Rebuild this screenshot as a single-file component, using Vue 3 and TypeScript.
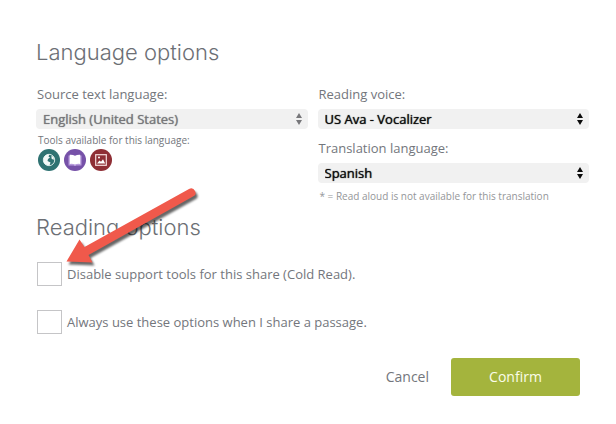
<script setup lang="ts">
import { ref } from 'vue'

const source = ref('English (United States)')
const voice = ref('US Ava - Vocalizer')
const translation = ref('Spanish')
const coldRead = ref(false)
const remember = ref(false)
</script>

<template>
  <form class="share" @submit.prevent>
    <section>
      <h2>Language options</h2>
      <div class="columns">
        <div class="column">
          <label for="source">Source text language:</label>
          <div class="picker disabled">
            <select id="source" v-model="source" disabled>
              <option>English (United States)</option>
            </select>
            <svg class="arrows" viewBox="0 0 6 12" aria-hidden="true"><path d="M3 0 6 5H0zM0 7h6L3 12z" /></svg>
          </div>
          <p class="tools-title">Tools available for this language:</p>
          <div class="tools">
            <svg viewBox="0 0 22 22" role="img" aria-label="Translate">
              <circle cx="11" cy="11" r="11" fill="#2f7272" />
              <circle cx="11" cy="11" r="5.700" fill="none" stroke="#d5e6e4" stroke-width="1" />
              <path d="M5.500 9.500Q7 5.300 11.500 5.300L10.500 7.500 12 8.500 10 10 9.500 12 12.500 13.500 11.500 16.500Q6.500 16.500 5.500 12.500zM13.500 6.500l2.500 2-.5 2.500-2-1.500z" fill="#f2f8f7" />
            </svg>
            <svg viewBox="0 0 22 22" role="img" aria-label="Dictionary">
              <circle cx="11" cy="11" r="11" fill="#7651a8" />
              <path d="M4.500 6.500h13v10h-5.200q-1.300 1-2.600 0H4.500z" fill="#b79bdc" />
              <path d="M5.800 5.800Q8.800 5.500 11 7q2.200-1.500 5.200-1.200v9.100q-3-.5-5.200.7-2.200-1.200-5.200-.7z" fill="#fff" />
            </svg>
            <svg viewBox="0 0 22 22" role="img" aria-label="Picture dictionary">
              <circle cx="11" cy="11" r="11" fill="#8f2e35" />
              <rect x="5.700" y="5.700" width="10.600" height="10.600" fill="none" stroke="#f5dddd" stroke-width="1.200" />
              <path d="m7 14.500 2.500-3 1.500 1.300 2-2.600 2.200 4.300z" fill="#fff" />
              <circle cx="9" cy="8.500" r="1" fill="#fff" />
            </svg>
          </div>
        </div>
        <div class="column">
          <label for="voice">Reading voice:</label>
          <div class="picker">
            <select id="voice" v-model="voice">
              <option>US Ava - Vocalizer</option>
            </select>
            <svg class="arrows" viewBox="0 0 6 12" aria-hidden="true"><path d="M3 0 6 5H0zM0 7h6L3 12z" /></svg>
          </div>
          <label for="translation" class="second">Translation language:</label>
          <div class="picker">
            <select id="translation" v-model="translation">
              <option>Spanish</option>
            </select>
            <svg class="arrows" viewBox="0 0 6 12" aria-hidden="true"><path d="M3 0 6 5H0zM0 7h6L3 12z" /></svg>
          </div>
          <p class="note">* = Read aloud is not available for this translation</p>
        </div>
      </div>
    </section>
    <section class="reading">
      <h2>Reading options</h2>
      <div class="checks">
        <label class="check"><input v-model="coldRead" type="checkbox" />Disable support tools for this share (Cold Read).</label>
        <label class="check"><input v-model="remember" type="checkbox" />Always use these options when I share a passage.</label>
      </div>
      <svg class="pointer" viewBox="0 0 144 90" aria-hidden="true">
        <path d="M8.500 71.500 21.500 49.500 26.500 57 131-1 Q135-3 137 1 T135 6.500 L30.500 65 34.500 72.500z" fill="#f0594b" />
      </svg>
    </section>
    <div class="actions">
      <button type="button" class="cancel">Cancel</button>
      <button type="submit" class="confirm">Confirm</button>
    </div>
  </form>
</template>

<style>
body {
  margin: 0;
  background: #fff;
}
</style>

<style scoped>
.share {
  padding: 36px 27px 28px 36px;
  color: #73767c;
  font: 13px/20px "Open Sans", "Noto Sans", sans-serif;
}
h2 {
  margin: 0;
  font: 300 22px/32px Inter, "Noto Sans", sans-serif;
  color: #6c6f75;
}
.columns {
  display: grid;
  grid-template-columns: 1fr 1fr;
  gap: 10px;
  margin-top: 16px;
}
.column > label {
  display: block;
  padding: 0 1px 5px;
}
.column > .second {
  padding-top: 9px;
}
.picker {
  display: grid;
  align-items: center;
  color: #0c0c0c;
}
.picker > * {
  grid-area: 1 / 1;
}
.picker.disabled {
  color: #77777a;
}
select {
  appearance: none;
  width: 100%;
  height: 20px;
  margin: 0;
  padding: 0 20px 0 7px;
  border: 0;
  border-radius: 4px;
  background: #f1f1f1;
  color: inherit;
  font: 500 13px/20px "Open Sans", "Noto Sans", sans-serif;
  text-shadow: 0 0 1px currentColor;
  opacity: 1;
}
.arrows {
  justify-self: end;
  width: 6px;
  height: 12px;
  margin-right: 6px;
  fill: currentColor;
  pointer-events: none;
}
.tools-title,
.note {
  margin: 0;
  padding: 3px 2px 1px;
  font-size: 10px;
  line-height: 16px;
}
.note {
  padding-top: 5px;
  color: #949699;
}
.tools {
  display: flex;
  gap: 4px;
  padding: 0 2px;
}
.tools svg {
  width: 22px;
  height: 22px;
}
.reading {
  position: relative;
  margin-top: 6px;
}
.checks {
  display: grid;
  gap: 24px;
  padding: 19px 1px 0;
}
.check {
  display: flex;
  align-items: center;
  gap: 5px;
}
.check input {
  appearance: none;
  box-sizing: border-box;
  flex: none;
  width: 25px;
  height: 24px;
  margin: 0;
  border: 1px solid #c5c5c7;
  background: #fff;
}
.check input:checked {
  background: #a4b43d;
}
.pointer {
  position: absolute;
  left: 22px;
  top: -21px;
  width: 144px;
  height: 90px;
  overflow: visible;
  pointer-events: none;
  filter: drop-shadow(2px 3px 1px #0009);
}
.actions {
  display: flex;
  justify-content: flex-end;
  align-items: center;
  gap: 22px;
  margin-top: 24px;
  padding-right: 9px;
}
button {
  border: 0;
  padding: 0;
  background: none;
  color: #73767c;
  font: 14px/20px "Open Sans", "Noto Sans", sans-serif;
}
.confirm {
  width: 129px;
  height: 38px;
  border-radius: 3px;
  background: #a4b43d;
  color: #fbfde9;
}
</style>
